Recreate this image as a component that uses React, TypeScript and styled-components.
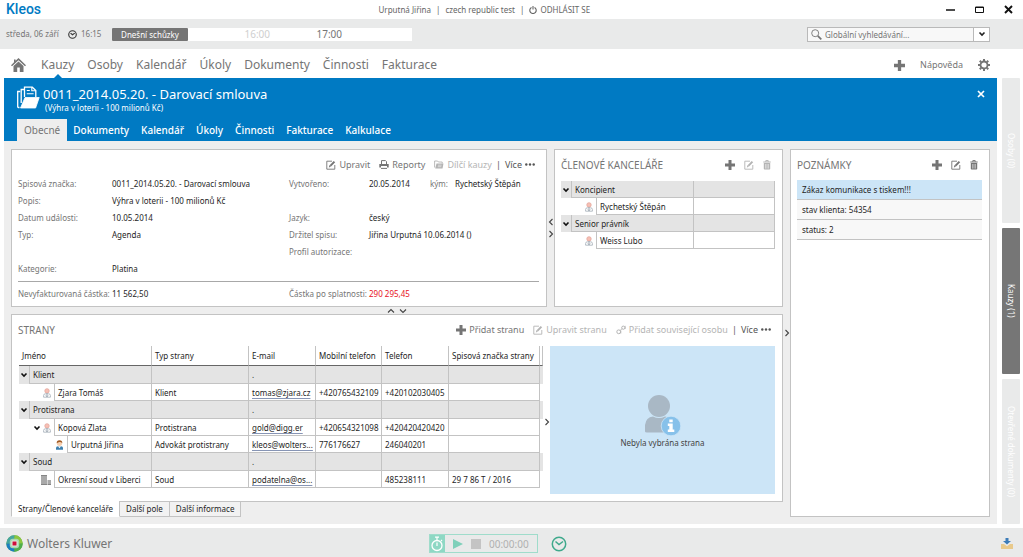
import React from "react";
import styled, { createGlobalStyle, css } from "styled-components";

const blue = "#007ac3";
const chrome = "#e9eaea";
const canvas = "#eeeeee";
const line = "#c3c3c3";
const grey = "#757575";
const pale = "#b4b4b4";

const GlobalStyle = createGlobalStyle`
  *, *::before, *::after { box-sizing: border-box; }
  body {
    margin: 0;
    background: #fff;
    color: #1e1e1e;
    font: 8px/12px "Noto Sans", "Open Sans", sans-serif;
  }
  button, input { font: inherit; color: inherit; }
  button { border: 0; padding: 0; background: none; cursor: pointer; }
  a { color: inherit; text-decoration: none; }
  h1, h2, p, ul, dl, dt, dd { margin: 0; padding: 0; font-weight: 400; }
  ul { list-style: none; }
  svg { display: block; flex: none; }
`;

/* ---------- icons ---------- */

const Svg = ({ w, h = w, vb, children, ...rest }: { w: number; h?: number; vb?: string; children: React.ReactNode } & React.SVGProps<SVGSVGElement>) => (
  <svg width={w} height={h} viewBox={vb ?? `0 0 ${w} ${h}`} fill="none" stroke="currentColor" aria-hidden="true" {...rest}>
    {children}
  </svg>
);

const PlusIcon = ({ size = 10 }: { size?: number }) => (
  <Svg w={size} vb="0 0 10 10" stroke="none" fill="currentColor">
    <path d="M3.5 0h3v3.5H10v3H6.5V10h-3V6.5H0v-3h3.5z" />
  </Svg>
);
const EditIcon = () => (
  <Svg w={10}>
    <path d="M6 1.2H.8v8h8V5" strokeWidth="0.9" />
    <path d="M2.8 7.4l.6-2L7.7.9l1.5 1.4-4.4 4.4z" fill="currentColor" stroke="none" />
    <path d="M3.8 5.6l1.1 1" stroke="#fff" strokeWidth="0.5" />
  </Svg>
);
const TrashIcon = () => (
  <Svg w={8} h={10}>
    <path d="M.3 2h7.4M2.8 1.8V.6h2.4v1.2" strokeWidth="1" />
    <path d="M.8 3h6.4v5.8q0 .8-.8.8H1.600q-.8 0-.8-.8z" fill="currentColor" stroke="none" />
    <path d="M2.600 4v4.600M4 4v4.600M5.400 4v4.600" stroke="#fff" strokeWidth="0.5" />
  </Svg>
);
const PrintIcon = () => (
  <Svg w={10} h={9}>
    <path d="M2.500 4V.6h4L7.500 1.600V4" strokeWidth="1" />
    <path d="M.3 4h9.400v3.600H8V6H2v1.600H.3z" fill="currentColor" stroke="none" />
    <path d="M2 8.400h6" strokeWidth="1" />
  </Svg>
);
const SubfolderIcon = () => (
  <Svg w={10} h={9}>
    <path d="M.6 7.500V1h3l.8 1h3.800v1.500" strokeWidth="0.9" />
    <path d="M2.500 3.500h7L8.500 8.500H1.200z" fill="currentColor" stroke="none" />
    <path d="M4 5.200h3.500M3.800 6.700h3.500" stroke="#fff" strokeWidth="0.5" />
  </Svg>
);
const LinkIcon = () => (
  <Svg w={10}>
    <circle cx="2.700" cy="6.800" r="1.900" />
    <circle cx="7.300" cy="2.700" r="1.600" />
    <path d="M4 5.500l2.200-1.800M4.800 8.500V5.500M9.200 4V.8" strokeWidth="0.8" />
  </Svg>
);
const DotsIcon = () => (
  <Svg w={10} h={3} stroke="none" fill="currentColor">
    <circle cx="1.300" cy="1.500" r="1.200" />
    <circle cx="5" cy="1.500" r="1.200" />
    <circle cx="8.700" cy="1.500" r="1.200" />
  </Svg>
);
const Chevron = ({ dir = "down", bold }: { dir?: "down" | "up" | "left" | "right"; bold?: boolean }) => {
  const d = {
    down: bold ? "M1.500 2.500L4 5l2.500-2.500" : "M1 2.500L4 5.500l3-3",
    up: "M1 5.500L4 2.500l3 3",
    left: "M5.500 1L2.500 4l3 3",
    right: "M2.500 1l3 3-3 3",
  }[dir];
  return (
    <Svg w={8}>
      <path d={d} strokeWidth={bold ? 1.6 : 1.1} />
    </Svg>
  );
};
const HomeIcon = () => (
  <Svg w={15} h={14} stroke="none" fill="currentColor">
    <path d="M7.500 0L15 7.200l-1 1L7.500 2.200 1 8.200l-1-1L3 4.300V1.500h1.600v1.300z" />
    <path d="M7.500 3.400l5 4.600v6H8.800V9.500H6.200V14H2.500V8z" />
  </Svg>
);
const ClockIcon = ({ size, weight, color }: { size: number; weight: number; color: string }) => (
  <Svg w={size} vb="0 0 16 16" stroke={color} strokeWidth={weight}>
    <circle cx="8" cy="8" r="6.700" />
    <path d="M4.500 5.500L8 8.500l4-3" />
  </Svg>
);
const PowerIcon = () => (
  <Svg w={8}>
    <path d="M2.500 1.500a3.200 3.200 0 1 0 3 0M4 0v3.600" strokeWidth="1.100" />
  </Svg>
);
const GearIcon = () => (
  <Svg w={12} vb="0 0 24 24" stroke="currentColor">
    <circle cx="12" cy="12" r="7" strokeWidth="3.600" />
    <g strokeWidth="4">
      <path d="M12 0v4M12 20v4M0 12h4M20 12h4M3.500 3.500l3 3M17.500 17.500l3 3M3.500 20.500l3-3M17.500 6.500l3-3" />
    </g>
  </Svg>
);
const SearchIcon = () => (
  <Svg w={11}>
    <circle cx="4.200" cy="4.200" r="3.500" strokeWidth="0.9" />
    <path d="M6.800 6.800l3.500 3.500" strokeWidth="1.700" />
  </Svg>
);
const CaseIcon = () => (
  <Svg w={23} h={23} stroke="#fff">
    <path d="M2.500 21.500H1.500a.8.8 0 0 1-.8-.8V5.500h2.500" strokeWidth="1.300" />
    <path d="M4.200 17V3.500h3.300" strokeWidth="1.300" />
    <path d="M7.500 11V1.200h7.800l3.500 3.300V11" strokeWidth="1.300" />
    <path d="M14.800 1.200v3.600h4M9.800 4.500h3M9.800 7.800h6.800" strokeWidth="1.100" />
    <path d="M8 11.500h14.200L18.600 22H3.500z" fill="#fff" stroke="#fff" strokeWidth="0.8" strokeLinejoin="round" />
  </Svg>
);
const PersonIcon = () => (
  <Svg w={8} h={10}>
    <circle cx="4" cy="2.900" r="2.200" fill="#f6c0b5" stroke="#e3a59b" strokeWidth="0.800" />
    <path d="M.6 9.200V7.500Q.6 5.800 2.400 5.800h3.200Q7.400 5.800 7.400 7.500v1.700z" fill="#fff" stroke="#a3adb7" strokeWidth="0.800" />
    <path d="M4 5v4M2.600 7.500l1.400 1 1.400-1" stroke="#8e99a6" strokeWidth="0.700" />
  </Svg>
);
const LawyerIcon = () => (
  <Svg w={9} h={10} stroke="none">
    <circle cx="4.500" cy="3.300" r="2.600" fill="#f6cfae" />
    <path d="M1.700 3.200Q1.500.2 4.500.2t2.800 3Q6 1.800 4.500 2T1.700 3.200z" fill="#a05a24" />
    <path d="M1 9.800V8q0-1.800 2-1.800h3q2 0 2 1.800v1.800z" fill="#3d7fae" />
    <path d="M3 6.200h3L4.500 8.200z" fill="#fff" />
  </Svg>
);
const CourtIcon = () => (
  <Svg w={10} stroke="none" fill="#858585">
    <path d="M0 0h6v10H0zM6.500 5H10v5H6.500z" />
    <path d="M0 2h6M0 4h6M0 6h10M0 8h10" stroke="#fff" strokeWidth="0.600" />
  </Svg>
);
const NobodyIcon = () => (
  <Svg w={36} h={42} stroke="none">
    <circle cx="14" cy="12" r="11" fill="#a9b8c5" />
    <path d="M0 37.500V31Q1 23 8 22.500q6 3 12 0 7 .5 8 8.500v3.500q0 4-4 4H2q-2 0-2-1z" fill="#a9b8c5" />
    <circle cx="26" cy="32" r="9.800" fill="#87c1ea" stroke="#cce5f7" strokeWidth="0.800" />
    <path d="M24.300 25.500h3.400v2.700h-3.400zM22.800 29.600h4.900v6h1.600v2.300h-6.500v-2.300h1.500v-3.700h-1.500z" fill="#fff" />
  </Svg>
);
const GlobeLogo = () => (
  <Svg w={17} stroke="none">
    <circle cx="8.500" cy="8.500" r="8.200" fill="#62b146" />
    <path d="M8.500.3a8.200 8.200 0 0 1 8.200 8.200l-3 .5L8 3.500z" fill="#8cc63f" />
    <path d="M.3 8.500A8.200 8.200 0 0 0 8.500 16.700V13L4 8z" fill="#1b7fc0" />
    <path d="M16.700 8.500a8.200 8.200 0 0 1-8.200 8.200V13l5-4.500z" fill="#4fae4c" />
    <path d="M.3 8.500A8.200 8.200 0 0 1 8.500.3L8 4 4 8.500z" fill="#45a6a0" />
    <rect x="3.800" y="3.800" width="9.400" height="9.400" rx="3" fill="#a9d8b0" />
    <rect x="5.500" y="5.500" width="6" height="6" rx="1" fill="#e6efe2" />
    <rect x="6.500" y="6.500" width="4" height="4" fill="#d0103a" />
  </Svg>
);
const StopwatchIcon = () => (
  <Svg w={12} h={16} stroke="#fff">
    <circle cx="6" cy="9.500" r="5" strokeWidth="1.300" />
    <path d="M4 1.200h4M6 1v3M6 6.500v3.500M10 4l1 1" strokeWidth="1.200" />
  </Svg>
);
const DownloadIcon = () => (
  <Svg w={12} h={11} stroke="none">
    <path d="M4.500 0h3v3H10L6 6.500 2 3h2.500z" fill="#3c7cb8" />
    <path d="M0 6h3l3 2.200L9 6h3v5H0z" fill="#e8c98b" />
  </Svg>
);

/* ---------- window chrome ---------- */

const Shell = styled.div`
  display: flex;
  flex-direction: column;
  min-height: 100vh;
`;
const TitleBar = styled.header`
  display: flex;
  align-items: center;
  height: 19px;
  color: #666;
`;
const Brand = styled.div`
  width: 37%;
  padding-left: 6px;
  font: 500 14px/19px Roboto, sans-serif;
  color: ${blue};
`;
const Session = styled.div`
  display: flex;
  align-items: center;
  gap: 5px;
`;
const TextButton = styled.button`
  display: flex;
  align-items: center;
  gap: 3px;
`;
const WindowButtons = styled.div`
  display: flex;
  gap: 20px;
  margin-left: auto;
  padding-right: 10px;
  color: #111;
`;
const DayBar = styled.div`
  display: flex;
  align-items: center;
  height: 30px;
  padding: 0 33px 0 6px;
  background: ${chrome};
  color: ${grey};
`;
const Today = styled.span`
  width: 62px;
`;
const Now = styled.span`
  display: flex;
  align-items: center;
  gap: 4px;
  width: 44px;
`;
const Agenda = styled.div`
  display: flex;
  align-items: center;
  width: 300px;
  height: 13px;
  background: #fff;
`;
const AgendaLabel = styled.span`
  width: 76px;
  border-radius: 1px;
  background: ${grey};
  color: #fff;
  line-height: 13px;
  text-align: center;
`;
const Hour = styled.span<{ $past?: boolean }>`
  width: ${(p) => (p.$past ? 82 : 72)}px;
  font-size: 10px;
  text-align: right;
  color: ${(p) => (p.$past ? "#cfcfcf" : grey)};
`;
const SearchBox = styled.form`
  display: flex;
  align-items: center;
  width: 183px;
  height: 15px;
  margin-left: auto;
  border: 1px solid #b9b9b9;
  background: #f8f8f8;
  padding-left: 3px;
`;
const SearchInput = styled.input`
  flex: 1;
  min-width: 0;
  height: 13px;
  margin-left: 3px;
  padding: 0;
  border: 0;
  outline: 0;
  background: none;
  &::placeholder { color: ${grey}; opacity: 1; }
`;
const SearchMore = styled.button`
  display: grid;
  place-items: center;
  width: 16px;
  height: 13px;
  border-left: 1px solid #b9b9b9;
  background: #fff;
  color: #222;
`;
const MainNav = styled.nav`
  display: flex;
  align-items: center;
  height: 29px;
  padding: 3px 33px 0 11px;
  color: ${grey};
`;
const NavLinks = styled.div`
  display: flex;
  gap: 13px;
  margin-left: 15px;
`;
const NavLink = styled.a<{ $active?: boolean }>`
  position: relative;
  font-size: 12px;
  line-height: 26px;
  ${(p) =>
    p.$active &&
    css`
      &::after {
        content: "";
        position: absolute;
        left: 50%;
        bottom: 0;
        margin-left: -4px;
        border: 4px solid transparent;
        border-top: 0;
        border-bottom-color: ${blue};
      }
    `}
`;
const NavTools = styled.div`
  display: flex;
  align-items: center;
  gap: 15px;
  margin-left: auto;
  font-size: 9px;
`;

/* ---------- workspace ---------- */

const Workspace = styled.div`
  display: flex;
  flex: 1;
  gap: 5px;
  padding: 0 3px 4px 4px;
`;
const CaseView = styled.main`
  display: flex;
  flex: 1;
  flex-direction: column;
  min-width: 0;
  background: ${canvas};
`;
const CaseHeader = styled.div`
  display: flex;
  flex-direction: column;
  justify-content: space-between;
  height: 63px;
  padding: 8px 12px 0 13px;
  background: ${blue};
  color: #fff;
`;
const CaseTitle = styled.div`
  display: flex;
  gap: 3px;
  align-items: flex-start;
`;
const TitleText = styled.div`
  flex: 1;
  h1 { font-size: 13px; line-height: 17px; }
  p { padding-left: 2px; line-height: 9px; }
`;
const CloseButton = styled.button`
  margin-top: 4px;
`;
const CaseTabs = styled.nav`
  display: flex;
`;
const CaseTab = styled.a<{ $active?: boolean }>`
  padding: 1px 6px 0;
  font-size: 10px;
  font-weight: 500;
  line-height: 21px;
  ${(p) => p.$active && css`padding: 1px 7px 0; background: ${canvas}; color: ${grey}; font-weight: 400;`}
`;
const Board = styled.div`
  display: flex;
  flex: 1;
  padding: 8px 7px 7px;
`;
const LeftSide = styled.div`
  display: flex;
  flex: 1;
  flex-direction: column;
  min-width: 0;
`;
const TopRow = styled.div`
  display: flex;
`;
const Panel = styled.section<{ $width?: number }>`
  display: flex;
  flex-direction: column;
  min-width: 0;
  padding: 4px 7px 4px 6px;
  border: 1px solid ${line};
  background: #fff;
  ${(p) => (p.$width ? css`flex: 0 0 ${p.$width}px;` : css`flex: 1;`)}
`;
const Splitter = styled.div<{ $horizontal?: boolean }>`
  display: flex;
  flex-direction: ${(p) => (p.$horizontal ? "row" : "column")};
  align-items: center;
  justify-content: center;
  gap: 4px;
  ${(p) => (p.$horizontal ? css`height: 7px;` : css`width: 7px;`)}
  color: #444;
`;
const PanelBar = styled.div`
  display: flex;
  align-items: center;
  min-height: 21px;
`;
const Heading = styled.h2`
  font-size: 10px;
  line-height: 18px;
  color: ${grey};
`;
const Actions = styled.div`
  display: flex;
  align-items: center;
  gap: 9px;
  margin-left: auto;
  padding-right: 4px;
  color: ${grey};
  font-size: 9px;
`;
const Action = styled.button`
  display: flex;
  align-items: center;
  gap: 3px;
  &:disabled { color: ${pale}; cursor: default; }
`;
const More = styled.div`
  display: flex;
  gap: 4px;
  margin-left: -5px;
  color: #555;
`;

/* ---------- case details ---------- */

const Facts = styled.dl`
  display: grid;
  grid-template-columns: 94px 177px 80px 61px 25px 1fr;
  grid-auto-rows: 17px;
  align-items: center;
  white-space: nowrap;
`;
const Term = styled.dt<{ $col: number; $row: number }>`
  grid-area: ${(p) => `${p.$row} / ${p.$col}`};
  color: ${grey};
`;
const Value = styled.dd<{ $col: number; $row: number; $alert?: boolean }>`
  grid-area: ${(p) => `${p.$row} / ${p.$col}`};
  ${(p) => p.$alert && css`color: #e81123;`}
`;
const Totals = styled(Facts)`
  margin-top: 4px;
  padding-top: 3px;
  border-top: 1px solid #a8a8a8;
`;

/* ---------- tree tables ---------- */

const TreeTable = styled.table`
  width: 100%;
  table-layout: fixed;
  border-collapse: separate;
  border-spacing: 0;
  white-space: nowrap;
  th { font-weight: 400; text-align: left; }
`;
const MembersTable = styled(TreeTable)`
  margin-top: 6px;
`;
const Col = styled.col<{ $width?: number }>`
  ${(p) => p.$width && css`width: ${p.$width}px;`}
`;
const HeadCell = styled.th`
  height: 20px;
  padding: 0 1px 0 3px;
  border-right: 1px solid ${line};
  border-bottom: 1px solid #666;
`;
const TreeRow = styled.tr<{ $group?: boolean; $height: number }>`
  height: ${(p) => p.$height}px;
  background: ${(p) => (p.$group ? "#e4e4e4" : "#fff")};
`;
const TreeCell = styled.th`
  padding: 0;
  border-right: 1px solid ${line};
`;
const TreeLine = styled.div<{ $height: number }>`
  display: flex;
  height: ${(p) => p.$height}px;
`;
const Gutter = styled.span<{ $width: number; $group?: boolean }>`
  display: flex;
  flex: 0 0 ${(p) => p.$width}px;
  align-items: center;
  justify-content: flex-end;
  gap: 2px;
  padding-right: ${(p) => (p.$group ? 1 : 3)}px;
  border-right: 1px solid ${line};
  color: #111;
`;
const Label = styled.span`
  display: flex;
  flex: 1;
  align-items: center;
  padding: 1px 3px 0;
  border-bottom: 1px solid ${line};
`;
const Cell = styled.td`
  padding: 1px 1px 0 3px;
  overflow: hidden;
  border-right: 1px solid ${line};
  border-bottom: 1px solid ${line};
`;
const EndCell = styled.td`
  padding: 0;
`;
const MailLink = styled.a`
  text-decoration: underline #8795b5;
  text-underline-offset: 2px;
`;
const Toggle = styled.button`
  display: block;
`;

/* ---------- parties ---------- */

const PartiesBody = styled.div`
  display: flex;
  flex: 1;
  margin-top: 6px;
`;
const TableArea = styled.div`
  flex: 1;
  min-width: 0;
  margin-left: 1px;
`;
const EmptyDetail = styled.div`
  display: flex;
  flex: 0 0 225px;
  flex-direction: column;
  align-items: center;
  justify-content: center;
  gap: 1px;
  height: 148px;
  padding-top: 3px;
  background: #cce5f7;
  color: #444;
`;
const BottomTabs = styled.nav`
  display: flex;
  align-items: flex-start;
`;
const BottomTab = styled.a<{ $active?: boolean }>`
  padding: 0 6px;
  border: 1px solid ${line};
  border-top: 0;
  line-height: 14px;
  background: #f2f2f2;
  & + & { border-left: 0; }
  ${(p) =>
    p.$active &&
    css`
      margin-top: -1px;
      padding-top: 1px;
      border-bottom-color: #fff;
      background: #fff;
    `}
`;

/* ---------- notes ---------- */

const NoteList = styled.ul`
  margin-top: 5px;
`;
const Note = styled.li<{ $selected?: boolean }>`
  padding-left: 5px;
  border-bottom: 1px solid ${line};
  line-height: 19px;
  background: ${(p) => (p.$selected ? "#cce5f7" : "#f8f8f8")};
`;

/* ---------- side rail and footer ---------- */

const Rail = styled.nav`
  display: flex;
  flex-direction: column;
  gap: 5px;
  width: 18px;
`;
const RailTab = styled.a<{ $active?: boolean }>`
  display: flex;
  flex: 1;
  align-items: center;
  justify-content: center;
  writing-mode: vertical-rl;
  border-radius: 1px;
  background: ${(p) => (p.$active ? "#767676" : chrome)};
  color: #fff;
`;
const Footer = styled.footer`
  display: flex;
  align-items: center;
  height: 29px;
  padding: 2px 10px 0 6px;
  background: ${chrome};
`;
const Company = styled.div`
  display: flex;
  align-items: center;
  gap: 4px;
  flex: 0 0 42%;
  font-size: 12px;
  color: ${grey};
`;
const Timers = styled.div`
  display: flex;
  align-items: center;
  gap: 13px;
`;
const Timer = styled.div`
  display: flex;
  align-items: center;
  gap: 8px;
  height: 19px;
  padding-right: 8px;
  border: 1px solid #9fdccb;
  font-size: 10px;
  color: #b0b0b0;
`;
const TimerMark = styled.span`
  display: grid;
  place-items: center;
  width: 15px;
  height: 17px;
  background: #8ed8c4;
`;
const Download = styled.button`
  margin-left: auto;
`;

const groupChevron = <Toggle aria-label="Sbalit"><Chevron bold /></Toggle>;

type Party = { level: 0 | 1 | 2; name: string; icon?: React.ReactNode; open?: boolean; cells?: string[] };

const parties: Party[] = [
  { level: 0, name: "Klient" },
  { level: 1, name: "Zjara Tomáš", icon: <PersonIcon />, cells: ["Klient", "tomas@zjara.cz", "+420765432109", "+420102030405", ""] },
  { level: 0, name: "Protistrana" },
  { level: 1, name: "Kopová Zlata", icon: <PersonIcon />, open: true, cells: ["Protistrana", "gold@digg.er", "+420654321098", "+420420420420", ""] },
  { level: 2, name: "Urputná Jiřina", icon: <LawyerIcon />, cells: ["Advokát protistrany", "kleos@wolters...", "776176627", "246040201", ""] },
  { level: 0, name: "Soud" },
  { level: 1, name: "Okresní soud v Liberci", icon: <CourtIcon />, cells: ["Soud", "podatelna@os...", "", "485238111", "29 7 86 T / 2016"] },
];

const members = [
  { group: true, name: "Koncipient" },
  { group: false, name: "Rychetský Štěpán" },
  { group: true, name: "Senior právník" },
  { group: false, name: "Weiss Lubo" },
];

const gutters = [11, 36, 49];

const DetailsPanel = () => (
  <Panel>
    <PanelBar>
      <Actions>
        <Action><EditIcon />Upravit</Action>
        <Action><PrintIcon />Reporty</Action>
        <Action disabled><SubfolderIcon />Dílčí kauzy</Action>
        <More>|<Action>Více <DotsIcon /></Action></More>
      </Actions>
    </PanelBar>
    <Facts>
      <Term $row={1} $col={1}>Spisová značka:</Term>
      <Value $row={1} $col={2}>0011_2014.05.20. - Darovací smlouva</Value>
      <Term $row={1} $col={3}>Vytvořeno:</Term>
      <Value $row={1} $col={4}>20.05.2014</Value>
      <Term $row={1} $col={5}>kým:</Term>
      <Value $row={1} $col={6}>Rychetský Štěpán</Value>
      <Term $row={2} $col={1}>Popis:</Term>
      <Value $row={2} $col={2}>Výhra v loterii - 100 milionů Kč</Value>
      <Term $row={3} $col={1}>Datum události:</Term>
      <Value $row={3} $col={2}>10.05.2014</Value>
      <Term $row={3} $col={3}>Jazyk:</Term>
      <Value $row={3} $col={4}>český</Value>
      <Term $row={4} $col={1}>Typ:</Term>
      <Value $row={4} $col={2}>Agenda</Value>
      <Term $row={4} $col={3}>Držitel spisu:</Term>
      <Value $row={4} $col={4}>Jiřina Urputná 10.06.2014 ()</Value>
      <Term $row={5} $col={3}>Profil autorizace:</Term>
      <Term $row={6} $col={1}>Kategorie:</Term>
      <Value $row={6} $col={2}>Platina</Value>
    </Facts>
    <Totals>
      <Term $row={1} $col={1}>Nevyfakturovaná částka:</Term>
      <Value $row={1} $col={2}>11 562,50</Value>
      <Term $row={1} $col={3}>Částka po splatnosti:</Term>
      <Value $row={1} $col={4} $alert>290 295,45</Value>
    </Totals>
  </Panel>
);

const MembersPanel = () => (
  <Panel $width={229}>
    <PanelBar>
      <Heading>ČLENOVÉ KANCELÁŘE</Heading>
      <Actions>
        <Action aria-label="Přidat"><PlusIcon /></Action>
        <Action aria-label="Upravit" disabled><EditIcon /></Action>
        <Action aria-label="Smazat" disabled><TrashIcon /></Action>
      </Actions>
    </PanelBar>
    <MembersTable>
      <colgroup>
        <Col />
        <Col $width={81} />
      </colgroup>
      <tbody>
        {members.map((m) => (
          <TreeRow key={m.name} $group={m.group} $height={17}>
            <TreeCell scope="row">
              <TreeLine $height={17}>
                <Gutter $width={m.group ? 11 : 36} $group={m.group}>{m.group ? groupChevron : <PersonIcon />}</Gutter>
                <Label>{m.name}</Label>
              </TreeLine>
            </TreeCell>
            <Cell />
          </TreeRow>
        ))}
      </tbody>
    </MembersTable>
  </Panel>
);

const PartiesPanel = () => (
  <Panel>
    <PanelBar>
      <Heading>STRANY</Heading>
      <Actions>
        <Action><PlusIcon />Přidat stranu</Action>
        <Action disabled><EditIcon />Upravit stranu</Action>
        <Action disabled><LinkIcon />Přidat související osobu</Action>
        <More>|<Action>Více <DotsIcon /></Action></More>
      </Actions>
    </PanelBar>
    <PartiesBody>
      <TableArea>
        <TreeTable>
          <colgroup>
            <Col />
            <Col $width={97} />
            <Col $width={67} />
            <Col $width={66} />
            <Col $width={67} />
            <Col $width={91} />
            <Col $width={3} />
          </colgroup>
          <thead>
            <tr>
              {["Jméno", "Typ strany", "E-mail", "Mobilní telefon", "Telefon", "Spisová značka strany"].map((t) => (
                <HeadCell key={t} scope="col">{t}</HeadCell>
              ))}
              <HeadCell as="td" />
            </tr>
          </thead>
          <tbody>
            {parties.map((p) => {
              const height = p.level === 0 ? 18 : 17;
              const cells = p.cells ?? ["", ".", "", "", ""];
              return (
                <TreeRow key={p.name} $group={p.level === 0} $height={height}>
                  <TreeCell scope="row">
                    <TreeLine $height={height}>
                      <Gutter $width={gutters[p.level]} $group={p.level === 0}>
                        {(p.level === 0 || p.open) && groupChevron}
                        {p.icon}
                      </Gutter>
                      <Label>{p.name}</Label>
                    </TreeLine>
                  </TreeCell>
                  {cells.map((c, i) => (
                    <Cell key={i}>{c.includes("@") ? <MailLink href={`mailto:${c}`}>{c}</MailLink> : c}</Cell>
                  ))}
                  <EndCell />
                </TreeRow>
              );
            })}
          </tbody>
        </TreeTable>
      </TableArea>
      <Splitter><Chevron dir="right" /></Splitter>
      <EmptyDetail>
        <NobodyIcon />
        <p>Nebyla vybrána strana</p>
      </EmptyDetail>
    </PartiesBody>
  </Panel>
);

const NotesPanel = () => (
  <Panel $width={200}>
    <PanelBar>
      <Heading>POZNÁMKY</Heading>
      <Actions>
        <Action aria-label="Přidat"><PlusIcon /></Action>
        <Action aria-label="Upravit"><EditIcon /></Action>
        <Action aria-label="Smazat"><TrashIcon /></Action>
      </Actions>
    </PanelBar>
    <NoteList>
      <Note $selected>Zákaz komunikace s tiskem!!!</Note>
      <Note>stav klienta: 54354</Note>
      <Note>status: 2</Note>
    </NoteList>
  </Panel>
);

export default function App() {
  return (
    <Shell>
      <GlobalStyle />
      <TitleBar>
        <Brand>Kleos</Brand>
        <Session>
          <span>Urputná Jiřina</span>|<span>czech republic test</span>|
          <TextButton><PowerIcon />ODHLÁSIT SE</TextButton>
        </Session>
        <WindowButtons>
          <TextButton aria-label="Minimalizovat"><Svg w={9}><path d="M0 5h9" strokeWidth="1.500" /></Svg></TextButton>
          <TextButton aria-label="Maximalizovat"><Svg w={9}><path d="M.5 2h8v5.500h-8zM.5 2.500h8" /></Svg></TextButton>
          <TextButton aria-label="Zavřít"><Svg w={9}><path d="M1 1l7 7M8 1L1 8" strokeWidth="1.900" /></Svg></TextButton>
        </WindowButtons>
      </TitleBar>
      <DayBar>
        <Today>středa, 06 září</Today>
        <Now><ClockIcon size={9} weight={2} color="#333" />16:15</Now>
        <Agenda>
          <AgendaLabel>Dnešní schůzky</AgendaLabel>
          <Hour $past>16:00</Hour>
          <Hour>17:00</Hour>
        </Agenda>
        <SearchBox onSubmit={(e) => e.preventDefault()}>
          <SearchIcon />
          <SearchInput aria-label="Globální vyhledávání" placeholder="Globální vyhledávání..." />
          <SearchMore type="button" aria-label="Možnosti hledání"><Chevron bold /></SearchMore>
        </SearchBox>
      </DayBar>
      <MainNav>
        <a href="#domu" aria-label="Domů"><HomeIcon /></a>
        <NavLinks>
          {["Kauzy", "Osoby", "Kalendář", "Úkoly", "Dokumenty", "Činnosti", "Fakturace"].map((t) => (
            <NavLink key={t} href="#" $active={t === "Kauzy"}>{t}</NavLink>
          ))}
        </NavLinks>
        <NavTools>
          <TextButton aria-label="Nový"><PlusIcon size={11} /></TextButton>
          <a href="#napoveda">Nápověda</a>
          <TextButton aria-label="Nastavení"><GearIcon /></TextButton>
        </NavTools>
      </MainNav>
      <Workspace>
        <CaseView>
          <CaseHeader>
            <CaseTitle>
              <CaseIcon />
              <TitleText>
                <h1>0011_2014.05.20. - Darovací smlouva</h1>
                <p>(Výhra v loterii - 100 milionů Kč)</p>
              </TitleText>
              <CloseButton aria-label="Zavřít kauzu"><Svg w={8}><path d="M1 1l6 6M7 1L1 7" strokeWidth="1.700" /></Svg></CloseButton>
            </CaseTitle>
            <CaseTabs>
              {["Obecné", "Dokumenty", "Kalendář", "Úkoly", "Činnosti", "Fakturace", "Kalkulace"].map((t) => (
                <CaseTab key={t} href="#" $active={t === "Obecné"}>{t}</CaseTab>
              ))}
            </CaseTabs>
          </CaseHeader>
          <Board>
            <LeftSide>
              <TopRow>
                <DetailsPanel />
                <Splitter><Chevron dir="left" /><Chevron dir="right" /></Splitter>
                <MembersPanel />
              </TopRow>
              <Splitter $horizontal><Chevron dir="up" /><Chevron /></Splitter>
              <PartiesPanel />
              <BottomTabs>
                <BottomTab href="#" $active>Strany/Členové kanceláře</BottomTab>
                <BottomTab href="#">Další pole</BottomTab>
                <BottomTab href="#">Další informace</BottomTab>
              </BottomTabs>
            </LeftSide>
            <Splitter><Chevron dir="right" /></Splitter>
            <NotesPanel />
          </Board>
        </CaseView>
        <Rail>
          <RailTab href="#">Osoby (0)</RailTab>
          <RailTab href="#" $active>Kauzy (1)</RailTab>
          <RailTab href="#">Otevřené dokumenty (0)</RailTab>
        </Rail>
      </Workspace>
      <Footer>
        <Company><GlobeLogo />Wolters Kluwer</Company>
        <Timers>
          <Timer>
            <TimerMark><StopwatchIcon /></TimerMark>
            <Svg w={10} stroke="none" fill="#7fd0ba"><path d="M0 0l10 5-10 5z" /></Svg>
            <Svg w={10} stroke="none" fill="#c4c4c4"><path d="M0 0h10v10H0z" /></Svg>
            <span>00:00:00</span>
          </Timer>
          <ClockIcon size={16} weight={1.500} color="#3fa98c" />
        </Timers>
        <Download aria-label="Stáhnout"><DownloadIcon /></Download>
      </Footer>
    </Shell>
  );
}
